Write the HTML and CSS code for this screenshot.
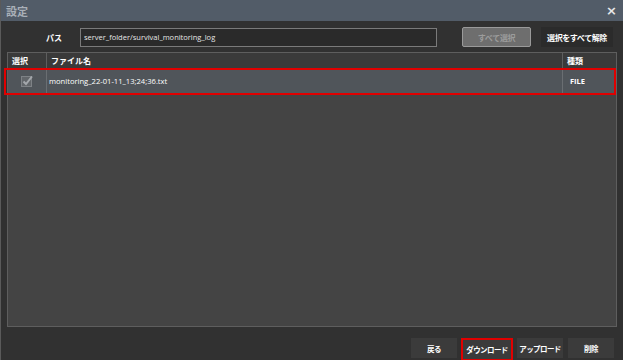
FILE: index.html
```html
<!DOCTYPE html>
<html lang="ja">
<head>
    <meta charset="UTF-8">
    <meta name="viewport" content="width=device-width, initial-scale=1.0">
    <link rel="stylesheet" href="styles.css">
</head>
<body>
    <div class="window">
        <div class="titlebar">
            <span class="title">設定</span>
            <span class="close">×</span>
        </div>

        <div class="pathrow">
            <label class="path-label" for="path">パス</label>
            <input class="path-input" id="path" type="text" value="server_folder/survival_monitoring_log">
            <button class="btn btn-disabled">すべて選択</button>
            <button class="btn btn-dark">選択をすべて解除</button>
        </div>

        <div class="filetable">
            <div class="thead">
                <div class="col-sel">選択</div>
                <div class="col-name">ファイル名</div>
                <div class="col-type">種類</div>
            </div>
            <div class="trow selected">
                <div class="col-sel">
                    <svg class="check" width="12" height="12" viewBox="0 0 12 12">
                        <rect x="0.5" y="1.5" width="10" height="10" fill="#62666a" stroke="#7e8286"/>
                        <path d="M2.5 6.5 L5 9 L11 1.5" fill="none" stroke="#a4a8ac" stroke-width="2"/>
                    </svg>
                </div>
                <div class="col-name">monitoring_22-01-11_13;24;36.txt</div>
                <div class="col-type">FILE</div>
                <div class="highlight"></div>
            </div>
        </div>

        <div class="footer">
            <button class="btn btn-foot">戻る</button>
            <button class="btn btn-foot marked">ダウンロード</button>
            <button class="btn btn-foot">アップロード</button>
            <button class="btn btn-foot">削除</button>
        </div>
    </div>
</body>
</html>
```

FILE: styles.css
```css
body {
    margin: 0;
    background: #ffffff;
    font-family: "Noto Sans CJK JP", "Noto Sans", sans-serif;
}

.window {
    width: 623px;
    height: 360px;
    background: #313131;
    border-left: 1px solid #5a5a5a;
    box-sizing: border-box;
    display: flex;
    flex-direction: column;
}

.titlebar {
    height: 21px;
    background: #525c68;
    display: flex;
    align-items: center;
    justify-content: space-between;
    padding: 0 6px 0 5px;
}

.title {
    color: #a9b0b8;
    font-size: 11px;
    font-weight: bold;
}

.close {
    color: #e8e8e8;
    font-size: 13px;
    font-weight: bold;
    font-family: "DejaVu Sans", sans-serif;
}

.pathrow {
    height: 31px;
    display: flex;
    align-items: center;
    padding-top: 1px;
    box-sizing: border-box;
}

.path-label {
    color: #ffffff;
    font-size: 8px;
    font-weight: bold;
    margin-left: 45px;
    width: 34px;
}

.path-input {
    width: 357px;
    height: 19px;
    box-sizing: border-box;
    background: #2a2a2a;
    border: 1px solid #7a7a7a;
    color: #e6e6e6;
    font-family: "Open Sans", sans-serif;
    font-size: 7.5px;
    padding: 0 3px;
}

.btn {
    font-family: "Noto Sans CJK JP", sans-serif;
    font-size: 8px;
    font-weight: bold;
    height: 20px;
    box-sizing: border-box;
    padding: 0;
    white-space: nowrap;
    cursor: default;
}

.btn-disabled {
    width: 69px;
    margin-left: 25px;
    background: #6e6e6e;
    border: 1px solid #9a9a9a;
    border-radius: 2px;
    color: #9c9c9c;
    letter-spacing: -0.3px;
}

.btn-dark {
    width: 72px;
    margin-left: 10px;
    background: #2b2b2b;
    border: none;
    color: #ffffff;
    letter-spacing: -0.4px;
}

.filetable {
    margin: 0 6px 0 6px;
    height: 275px;
    background: #444444;
    border: 1px solid #5e5e5e;
    box-sizing: border-box;
    display: flex;
    flex-direction: column;
}

.thead {
    display: flex;
    height: 15px;
    background: #3a3a3a;
    color: #ffffff;
    font-size: 8px;
    font-weight: bold;
    border-bottom: 1px solid #5e5e5e;
}

.thead > div {
    display: flex;
    align-items: center;
    padding-left: 4px;
    box-sizing: border-box;
}

.col-sel {
    width: 39px;
    border-right: 1px solid #5e5e5e;
}

.col-name {
    flex: 1;
    border-right: 1px solid #5e5e5e;
}

.col-type {
    width: 53px;
}

.trow {
    position: relative;
    display: flex;
    height: 24px;
    background: #50555a;
    color: #ffffff;
    font-size: 8px;
    border-bottom: 1px solid #3c7f86;
}

.trow > .col-sel,
.trow > .col-name,
.trow > .col-type {
    display: flex;
    align-items: center;
    box-sizing: border-box;
    border-right-color: #6a6e72;
}

.trow > .col-sel {
    justify-content: center;
}

.trow > .col-name {
    padding-left: 2px;
    font-family: "Open Sans", sans-serif;
    font-size: 7.6px;
}

.trow > .col-type {
    padding-left: 7px;
    font-family: "Open Sans", sans-serif;
    font-weight: bold;
    font-size: 7.5px;
}

.highlight {
    position: absolute;
    left: -4px;
    right: 0;
    top: -1px;
    bottom: -2px;
    border: 2px solid #e00000;
    pointer-events: none;
}

.footer {
    flex: 1;
    display: flex;
    justify-content: flex-end;
    align-items: flex-end;
    gap: 5px;
    padding: 0 9px 2px 0;
}

.btn-foot {
    width: 46px;
    background: #3b3b3b;
    border: none;
    color: #ffffff;
    font-size: 7.5px;
    letter-spacing: -0.6px;
}

.marked {
    width: 50px;
    outline: 2px solid #e00000;
    outline-offset: -1px;
    margin-bottom: -2px;
    height: 21px;
}
```
